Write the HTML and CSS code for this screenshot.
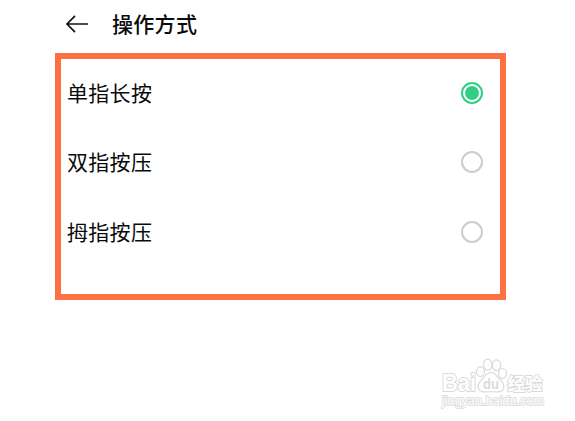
FILE: index.html
```html
<!DOCTYPE html>
<html lang="zh-CN">
<head>
    <meta charset="UTF-8">
    <meta name="viewport" content="width=device-width, initial-scale=1.0">
    <title>操作方式</title>
    <link rel="stylesheet" href="styles.css">
</head>
<body>
    <div class="container">
        <header class="header">
            <a href="#" class="back" aria-label="返回">
                <svg width="24" height="20" viewBox="0 0 24 20">
                    <path d="M10 1.800L2 10l8 8.200M2 10h21"/>
                </svg>
            </a>
            <h1>操作方式</h1>
        </header>
        <ul class="options">
            <li><span>单指长按</span><i class="radio checked"></i></li>
            <li><span>双指按压</span><i class="radio"></i></li>
            <li><span>拇指按压</span><i class="radio"></i></li>
        </ul>
        <div class="watermark">
            <svg width="115" height="56" viewBox="0 0 115 56">
                <text class="brand" x="6" y="35" textLength="34" lengthAdjust="spacingAndGlyphs">Bai</text>
                <g class="paw">
                    <ellipse cx="44.500" cy="15.700" rx="3.900" ry="5"/>
                    <ellipse cx="51.700" cy="8.700" rx="4.200" ry="5.500"/>
                    <ellipse cx="60.500" cy="9.300" rx="4.200" ry="5.500"/>
                    <ellipse cx="66.500" cy="17.500" rx="4" ry="5"/>
                    <path d="M55 16.500c-4 0-5.500 3.500-8 6-3 3-6 5.500-4.500 10 1.500 4 5.500 3.500 12.500 3.200 7 .3 11 .8 12.500-3.200 1.500-4.500-1.500-7-4.500-10-2.500-2.500-4-6-8-6z"/>
                </g>
                <text class="du" x="47" y="33" textLength="16" lengthAdjust="spacingAndGlyphs">du</text>
                <text class="cn" x="71.500" y="34" textLength="35" lengthAdjust="spacingAndGlyphs">经验</text>
                <text class="site" x="6" y="48.500" textLength="102" lengthAdjust="spacingAndGlyphs">jingyan.baidu.com</text>
            </svg>
        </div>
    </div>
</body>
</html>
```
FILE: styles.css
```css
*{margin:0; padding:0; box-sizing:border-box;}
a{text-decoration:none;}
ul,li{list-style:none;}

body{
    background-color:#fff;
    color:#0a0a0a;
    font-family:"Noto Sans CJK SC", sans-serif;
}
.container{
    position:relative;
    width:575px; height:421px;
    overflow:hidden;
}

.header{
    display:flex;
    align-items:center;
    height:53px;
    padding:0 0 5px 65px;
}
.header .back{display:block; width:47px; height:20px;}
.header svg{display:block;}
.header path{
    fill:none;
    stroke:#111;
    stroke-width:1.7;
}
.header h1{
    padding-bottom:2px;
    font-size:21px;
    font-weight:500;
    line-height:30px;
    letter-spacing:.3px;
}

.options{
    width:451px; height:247px;
    margin-left:55px;
    border:6px solid #fb7144;
}
.options li{
    display:flex;
    align-items:center;
    justify-content:space-between;
    height:69.3px;
    padding:0 17px 1px 6px;
    font-size:21px;
    line-height:30px;
    letter-spacing:.3px;
}
.options span{padding-bottom:2px;}
.radio{
    display:block;
    width:22px; height:22px;
    border:2px solid #ccc;
    border-radius:50%;
}
.radio.checked{
    padding:2px;
    border-color:#2fce83;
}
.radio.checked::before{
    content:"";
    display:block;
    width:14px; height:14px;
    border-radius:50%;
    background-color:#2fce83;
}

.watermark{
    position:absolute;
    left:436px; top:356px;
}
.watermark svg{display:block;}
.watermark text, .paw{
    fill:#fff;
    stroke:#dadada;
    stroke-width:1.2;
}
.watermark text{
    font-family:"Liberation Sans", "Noto Sans CJK SC", sans-serif;
    stroke-width:2;
    stroke-linejoin:round;
    paint-order:stroke;
}
.watermark .brand{font-size:23px; font-weight:bold;}
.watermark .du{
    fill:#dadada;
    stroke:none;
    font-size:14px;
    font-weight:bold;
}
.watermark .cn{font-size:17.5px; font-weight:bold;}
.watermark .site{font-size:12px; stroke:#dedede; stroke-width:1.8;}
```
